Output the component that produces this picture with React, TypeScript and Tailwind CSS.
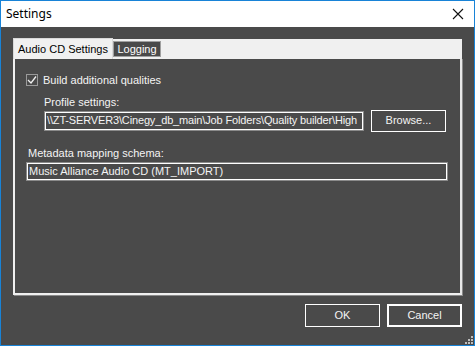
import React from "react";

export default function App() {
  const f = { fontFamily: '"Liberation Sans", Arial, sans-serif' };
  return (
    <div className="w-[475px] h-[346px] flex flex-col border border-[#1883d7] bg-[#4a4a4a] overflow-hidden" style={f}>
      {/* title bar */}
      <div className="h-[26px] bg-white flex items-center justify-between shrink-0">
        <span className="pl-[5px] text-[12px] text-black" style={{ fontFamily: '"Noto Sans", "Open Sans", sans-serif' }}>Settings</span>
        <svg width="12" height="12" viewBox="0 0 12 12" className="mr-[10px]">
          <path d="M1 1 L11 11 M11 1 L1 11" stroke="#111" strokeWidth="1.1" />
        </svg>
      </div>
      {/* body */}
      <div className="flex-1 flex flex-col pl-[12px] pt-[12px] relative">
        {/* tab control */}
        <div className="w-[449px] flex flex-col">
          <div className="h-[19px] bg-[#f0f0f0] flex items-end">
            <div className="h-[21px] -mb-[1px] w-[100px] bg-[#f0f0f0] border border-[#d9d9d9] border-b-0 flex items-center pl-[4px] text-[11px] text-black relative z-10 self-end">
              Audio CD Settings
            </div>
            <div className="h-[16px] mb-[1px] w-[48px] bg-[#4a4a4a] border border-[#a0a0a0] flex items-center justify-center text-[11px] text-white">
              Logging
            </div>
          </div>
          <div className="h-[237px] border-l-2 border-t border-r-2 border-b-2 border-l-[#f0f0f0] border-t-[#f0f0f0] border-r-[#e8e8e8] border-b-[#f0f0f0] shadow-[1px_1px_0_0_#8a8a8a] flex flex-col text-[11px] text-[#f4f4f4]">
            <div className="flex items-center pl-[11px] pt-[13px]">
              <div className="w-[12px] h-[12px] border border-[#9a9a9a] bg-[#4a4a4a] flex items-center justify-center">
                <svg width="10" height="10" viewBox="0 0 10 10">
                  <path d="M1 5 L4 8 L9 1.5" stroke="#f0f0f0" strokeWidth="1.3" fill="none" />
                </svg>
              </div>
              <span className="ml-[5px]">Build additional qualities</span>
            </div>
            <div className="pl-[29px] pt-[7px] leading-[13px]">Profile settings:</div>
            <div className="flex items-center pl-[29px] pt-[1px]">
              <div className="w-[320px] h-[20px] border border-[#8a8a8a] p-0">
                <div className="w-full h-full border border-white flex items-center pl-[1px] overflow-hidden whitespace-nowrap tracking-[-0.15px]">
                  {"\\\\ZT-SERVER3\\Cinegy_db_main\\Job Folders\\Quality builder\\High"}
                </div>
              </div>
              <div className="ml-[7px] w-[75px] h-[22px] border border-white flex items-center justify-center">
                Browse...
              </div>
            </div>
            <div className="pl-[13px] pt-[15px] leading-[13px]">Metadata mapping schema:</div>
            <div className="pl-[11px] pt-[2px]">
              <div className="w-[422px] h-[19px] border border-[#8a8a8a]">
                <div className="w-full h-full border border-white flex items-center pl-[1px] whitespace-nowrap">
                  Music Alliance Audio CD (MT_IMPORT)
                </div>
              </div>
            </div>
          </div>
        </div>
        {/* buttons */}
        <div className="w-[449px] flex justify-end gap-[7px] pt-[9px] text-[11px] text-[#f4f4f4]">
          <div className="w-[75px] h-[23px] border border-white flex items-center justify-center">OK</div>
          <div className="w-[75px] h-[23px] border-2 border-white flex items-center justify-center">Cancel</div>
        </div>
        {/* resize grip */}
        <div className="absolute right-[1px] bottom-[1px] w-[8px] h-[8px]">
          <svg width="8" height="8" viewBox="0 0 8 8">
            <rect x="6" y="0" width="2" height="2" fill="#bdbdbd" />
            <rect x="3" y="3" width="2" height="2" fill="#bdbdbd" />
            <rect x="6" y="3" width="2" height="2" fill="#bdbdbd" />
            <rect x="0" y="6" width="2" height="2" fill="#bdbdbd" />
            <rect x="3" y="6" width="2" height="2" fill="#bdbdbd" />
            <rect x="6" y="6" width="2" height="2" fill="#bdbdbd" />
          </svg>
        </div>
      </div>
    </div>
  );
}
